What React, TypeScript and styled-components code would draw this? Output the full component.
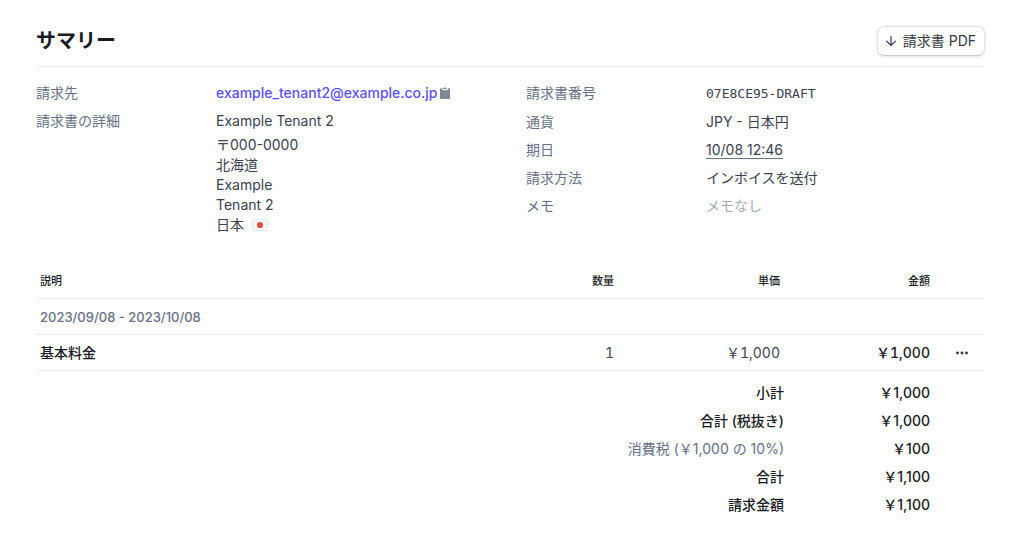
import React from 'react';
import styled, { createGlobalStyle } from 'styled-components';

const GlobalStyle = createGlobalStyle`
  *, *::before, *::after { box-sizing: border-box; }
  body {
    margin: 0;
    background: #fff;
    color: #353a44;
    font: 400 14px/20px Inter, "Noto Sans CJK JP", sans-serif;
    -webkit-font-smoothing: antialiased;
  }
  button { font: inherit; color: inherit; }
`;

const Page = styled.main`
  padding: 26px 40px 26px 36px;
`;

const Header = styled.header`
  display: flex;
  align-items: center;
  justify-content: space-between;
  padding-bottom: 10px;
  border-bottom: 1px solid #ebeef1;
`;

const Title = styled.h1`
  margin: 0;
  font-size: 20px;
  line-height: 28px;
  font-weight: 700;
  color: #1a1b25;
`;

const PdfButton = styled.button`
  display: flex;
  align-items: center;
  gap: 6px;
  height: 30px;
  margin-right: -1px;
  padding: 0 8px 0 7px;
  border: 1px solid #e0e2e6;
  border-bottom-color: #c8cbd0;
  border-radius: 7px;
  background: #fff;
  box-shadow: 0 1px 3px rgba(60, 66, 87, 0.14);
  font-weight: 400;
  color: #353a44;
  cursor: pointer;
`;

const Details = styled.div`
  display: grid;
  grid-template-columns: 1fr 1fr;
  column-gap: 32px;
  padding-top: 16px;
`;

const DetailList = styled.dl`
  display: grid;
  grid-template-columns: 180px 1fr;
  row-gap: 8px;
  align-content: start;
  margin: 0;
`;

const Label = styled.dt`
  color: #687087;
`;

const Value = styled.dd<{ $muted?: boolean }>`
  margin: 0;
  color: ${(p) => (p.$muted ? '#a3acba' : '#3c4050')};
`;

const EmailRow = styled.div`
  display: flex;
  align-items: center;
`;

const EmailLink = styled.a`
  color: #5a50f8;
  font-weight: 500;
  text-decoration: none;
`;

const IconButton = styled.button`
  display: flex;
  align-items: center;
  justify-content: center;
  padding: 0;
  border: 0;
  background: none;
  cursor: pointer;
`;

const Address = styled.address`
  margin-top: 4px;
  font-style: normal;
`;

const Country = styled.div`
  display: flex;
  align-items: center;
  gap: 8px;
`;

const Mono = styled.span`
  display: block;
  font: 400 13px/21px "DejaVu Sans Mono", monospace;
`;

const DueDate = styled.span`
  display: block;
  width: fit-content;
  height: 19px;
  border-bottom: 1px solid #687385;
`;

const LineItems = styled.table`
  width: 100%;
  margin-top: 28px;
  border-collapse: separate;
  border-spacing: 0;
  table-layout: fixed;
`;

const Col = styled.col<{ $width?: number }>`
  width: ${(p) => (p.$width ? `${p.$width}px` : 'auto')};
`;

const HeadCell = styled.th<{ $right?: boolean }>`
  height: 36px;
  padding: 0 4px;
  border-bottom: 1px solid #ebeef1;
  font-size: 11px;
  font-weight: 500;
  color: #1a1b25;
  text-align: ${(p) => (p.$right ? 'right' : 'left')};
`;

const Cell = styled.td<{ $right?: boolean; $strong?: boolean }>`
  height: 36px;
  padding: 0 4px;
  border-bottom: 1px solid #ebeef1;
  font-weight: ${(p) => (p.$strong ? 500 : 400)};
  color: ${(p) => (p.$strong ? '#1a1b25' : '#414552')};
  font-variant-numeric: tabular-nums;
  text-align: ${(p) => (p.$right ? 'right' : 'left')};
`;

const PeriodCell = styled(Cell)`
  font-size: 13px;
  font-weight: 500;
  font-variant-numeric: normal;
  color: #687087;
`;

const ActionCell = styled(Cell)`
  padding: 0 16px 0 22px;
`;

const Totals = styled.tfoot`
  tr:first-child > * {
    height: 36px;
    padding-top: 8px;
  }
`;

const TotalLabel = styled.th<{ $muted?: boolean }>`
  height: 28px;
  padding: 0;
  text-align: right;
  font-weight: ${(p) => (p.$muted ? 400 : 500)};
  color: ${(p) => (p.$muted ? '#687087' : '#1a1b25')};
`;

const TotalAmount = styled.td`
  height: 28px;
  padding: 0 4px;
  text-align: right;
  font-weight: 500;
  color: #1a1b25;
`;

const DownArrow = () => (
  <svg width="12" height="12" viewBox="0 0 12 12" fill="none" stroke="#474e6b" strokeWidth="1.4" strokeLinecap="round" strokeLinejoin="round" aria-hidden="true">
    <path d="M6 1.800v8.500M1.700 6.300L6 10.500l4.300-4.200" />
  </svg>
);

const Clipboard = () => (
  <svg width="14" height="14" viewBox="0 0 14 14" aria-hidden="true">
    <path fill="#7f8896" d="M3 2.200h1.100v.5a1.500 1.500 0 0 0 1.500 1.500h2.800a1.500 1.500 0 0 0 1.500-1.500v-.5H11a1 1 0 0 1 1 1V12a1 1 0 0 1-1 1H3a1 1 0 0 1-1-1V3.200a1 1 0 0 1 1-1z" />
    <path fill="#7f8896" d="M5.300 2.100h.8a.9.900 0 0 1 1.800 0h.8v.4a.5.500 0 0 1-.5.500H5.800a.5.500 0 0 1-.5-.5z" />
  </svg>
);

const JapanFlag = () => (
  <svg width="16" height="12" viewBox="0 0 16 12" role="img" aria-label="日本">
    <rect x="0.5" y="0.5" width="15" height="11" rx="1" fill="#f6f8fa" stroke="#e3e8ee" />
    <circle cx="8" cy="6" r="3.100" fill="#e25141" />
  </svg>
);

const Dots = () => (
  <svg width="12" height="4" viewBox="0 0 12 4" fill="#353a44" aria-hidden="true">
    <circle cx="1.500" cy="2" r="1.450" />
    <circle cx="6" cy="2" r="1.450" />
    <circle cx="10.500" cy="2" r="1.450" />
  </svg>
);

const totals = [
  { label: '小計', amount: '￥1,000' },
  { label: '合計 (税抜き)', amount: '￥1,000' },
  { label: '消費税 (￥1,000 の 10%)', amount: '￥100', muted: true },
  { label: '合計', amount: '￥1,100' },
  { label: '請求金額', amount: '￥1,100' },
];

export default function App() {
  return (
    <>
      <GlobalStyle />
      <Page>
        <Header>
          <Title>サマリー</Title>
          <PdfButton type="button">
            <DownArrow />
            請求書 PDF
          </PdfButton>
        </Header>

        <Details>
          <DetailList>
            <Label>請求先</Label>
            <Value>
              <EmailRow>
                <EmailLink href="mailto:example_tenant2@example.co.jp">example_tenant2@example.co.jp</EmailLink>
                <IconButton type="button" aria-label="コピー">
                  <Clipboard />
                </IconButton>
              </EmailRow>
            </Value>
            <Label>請求書の詳細</Label>
            <Value>
              Example Tenant 2
              <Address>
                <div>〒000-0000</div>
                <div>北海道</div>
                <div>Example</div>
                <div>Tenant 2</div>
                <Country>
                  日本
                  <JapanFlag />
                </Country>
              </Address>
            </Value>
          </DetailList>

          <DetailList>
            <Label>請求書番号</Label>
            <Value>
              <Mono>07E8CE95-DRAFT</Mono>
            </Value>
            <Label>通貨</Label>
            <Value>JPY - 日本円</Value>
            <Label>期日</Label>
            <Value>
              <DueDate>10/08 12:46</DueDate>
            </Value>
            <Label>請求方法</Label>
            <Value>インボイスを送付</Value>
            <Label>メモ</Label>
            <Value $muted>メモなし</Value>
          </DetailList>
        </Details>

        <LineItems>
          <colgroup>
            <Col />
            <Col $width={166} />
            <Col $width={166} />
            <Col $width={150} />
            <Col $width={50} />
          </colgroup>
          <thead>
            <tr>
              <HeadCell scope="col">説明</HeadCell>
              <HeadCell scope="col" $right>数量</HeadCell>
              <HeadCell scope="col" $right>単価</HeadCell>
              <HeadCell scope="col" $right>金額</HeadCell>
              <HeadCell as="td" />
            </tr>
          </thead>
          <tbody>
            <tr>
              <PeriodCell colSpan={5}>2023/09/08 - 2023/10/08</PeriodCell>
            </tr>
            <tr>
              <Cell $strong>基本料金</Cell>
              <Cell $right>1</Cell>
              <Cell $right>￥1,000</Cell>
              <Cell $right $strong>￥1,000</Cell>
              <ActionCell>
                <IconButton type="button" aria-label="その他">
                  <Dots />
                </IconButton>
              </ActionCell>
            </tr>
          </tbody>
          <Totals>
            {totals.map((t) => (
              <tr key={t.label}>
                <TotalLabel scope="row" colSpan={3} $muted={t.muted}>{t.label}</TotalLabel>
                <TotalAmount>{t.amount}</TotalAmount>
                <td />
              </tr>
            ))}
          </Totals>
        </LineItems>
      </Page>
    </>
  );
}
